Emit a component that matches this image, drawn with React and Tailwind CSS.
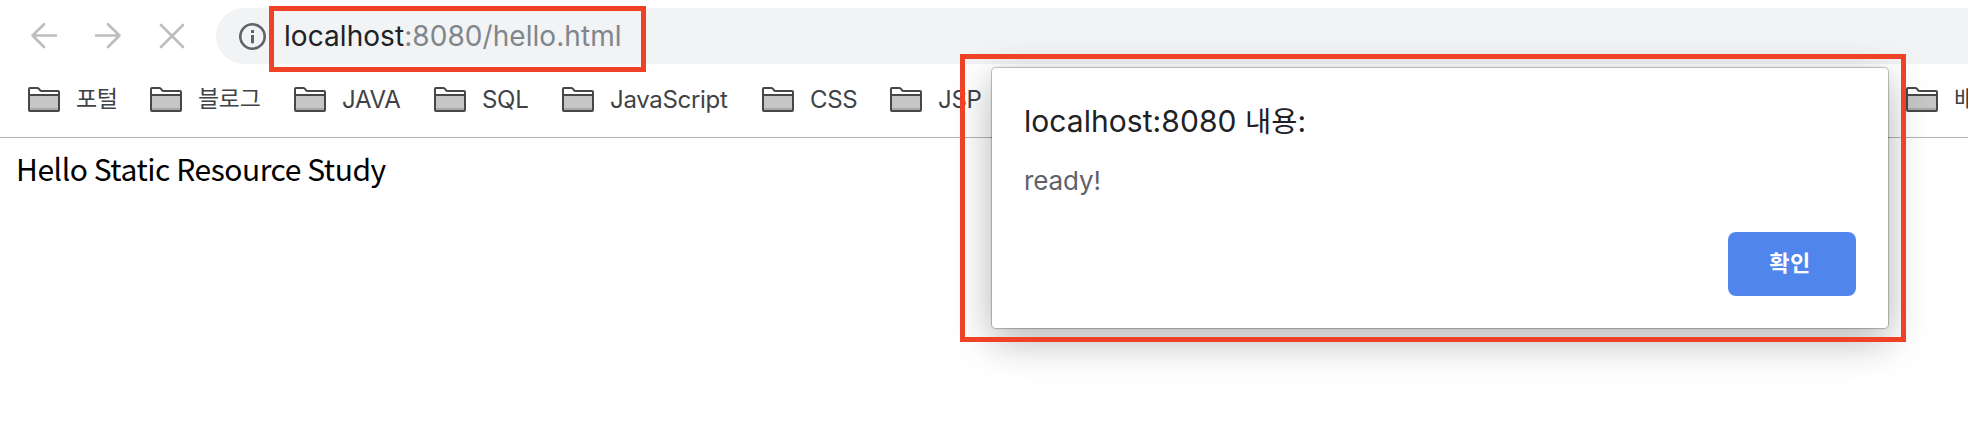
const ui = "font-['Inter','Noto_Sans_CJK_KR',sans-serif]";

function Folder() {
  return (
    <svg className="h-[26px] w-8 shrink-0" viewBox="0 0 32 26" fill="none">
      <path d="M1 23.5V2.5Q1 1 2.500 1H10.500L13.500 4H29.500Q31 4 31 5.500V23.500Q31 24.500 29.500 24.500H2.500Q1 24.500 1 23.500Z" fill="#fff" />
      <path d="M2 9H30V24H2Z" fill="#c6c6c6" />
      <path d="M2 21H30V23H2Z" fill="#a9a9a9" />
      <path d="M1 8H31" stroke="#474747" strokeWidth="2" />
      <path d="M1 22.500V2Q1 1 2 1H9.500Q10.500 1 11 2L12 3.200Q12.500 4 13.500 4H30Q31 4 31 5V23Q31 24 30 24H2Q1 24 1 23Z" stroke="#474747" strokeWidth="2" />
    </svg>
  );
}

function Bookmark({ label, width, text = "text-2xl tracking-[-0.3px]" }) {
  return (
    <div className={`flex shrink-0 items-center gap-4 ${width}`}>
      <Folder />
      <span className={`whitespace-nowrap leading-7 text-[#3f4246] ${text}`}>{label}</span>
    </div>
  );
}

export default function App() {
  return (
    <div className={`relative h-[422px] w-[1968px] overflow-hidden bg-white ${ui}`}>
      <header className="flex h-[138px] flex-col border-b border-[#b3b4b5]">
        <div className="flex h-[72px] items-start">
          <nav className="flex gap-8 pl-7 pt-5 text-[#bcbdbf]">
            <svg className="size-8" viewBox="0 0 32 32" fill="none" stroke="currentColor" strokeWidth="2.700" strokeLinecap="round" strokeLinejoin="round">
              <path d="M28 15.500H4.500M16 4.200L4.500 15.500L16 27" />
            </svg>
            <svg className="size-8" viewBox="0 0 32 32" fill="none" stroke="currentColor" strokeWidth="2.700" strokeLinecap="round" strokeLinejoin="round">
              <path d="M4 15.500H27.500M16 4.200L27.500 15.500L16 27" />
            </svg>
            <svg className="size-8" viewBox="0 0 32 32" fill="none" stroke="currentColor" strokeWidth="2.700" strokeLinecap="round">
              <path d="M5 5L27 27M27 5L5 27" />
            </svg>
          </nav>
          <div className="ml-7 mt-2 flex h-14 flex-1 items-center rounded-l-full bg-[#f1f3f4] pl-[22px]">
            <svg className="size-7 shrink-0" viewBox="0 0 28 28" fill="none">
              <circle cx="14.500" cy="14.500" r="12.200" stroke="#606368" strokeWidth="2.600" />
              <path d="M13 8H16V11H13ZM13 13H16V21.200H13Z" fill="#606368" />
            </svg>
            <span className="ml-[18px] whitespace-nowrap text-[28px] leading-8 tracking-[0.06px] text-[#202124]">
              localhost<span className="text-[#80868b]">:8080/hello.html</span>
            </span>
          </div>
        </div>
        <div className="flex h-14 items-center pl-7">
          <Bookmark label="포털" width="w-[122px]" text="pb-[2px] text-[23px] tracking-[-0.3px]" />
          <Bookmark label="블로그" width="w-36" text="pb-[2px] text-[23px] tracking-[-0.3px]" />
          <Bookmark label="JAVA" width="w-[140px]" />
          <Bookmark label="SQL" width="w-32" />
          <Bookmark label="JavaScript" width="w-[200px]" />
          <Bookmark label="CSS" width="w-32" />
          <Bookmark label="JSP" width="w-[1016px]" />
          <Bookmark label="배" width="w-[122px]" text="pb-[2px] text-[23px]" />
        </div>
      </header>
      <main className="px-4 pt-[8px] font-['Noto_Sans_CJK_KR',sans-serif] text-[30px] leading-[44px] tracking-[-0.45px] text-black">
        Hello Static Resource Study
      </main>

      <section
        role="dialog"
        className="absolute left-[992px] top-[68px] flex h-[260px] w-[896px] flex-col rounded-[4px] bg-white px-8 pb-8 pt-8 shadow-[0_0_1px_1px_rgba(0,0,0,0.25),0_12px_40px_rgba(0,0,0,0.3)]"
      >
        <h1 className="whitespace-nowrap text-[30px] leading-[42px] tracking-[0.05px] text-[#202124]">
          localhost:8080 <span className="text-[28.5px]">내용</span>:
        </h1>
        <p className="mt-[22px] text-[26px] leading-8 tracking-[-0.1px] text-[#5f6368]">ready!</p>
        <button className="ml-auto mt-auto h-16 w-32 rounded-lg bg-[#5086ec] pb-[2px] pr-1 text-[22px] font-bold tracking-[0.5px] text-white">확인</button>
      </section>

      <div className="absolute left-[269px] top-[6px] h-[66px] w-[377px] border-[5px] border-[#ee4126]" />
      <div className="absolute left-[960px] top-[54px] h-[288px] w-[946px] border-[5px] border-[#ee4126]" />
    </div>
  );
}
